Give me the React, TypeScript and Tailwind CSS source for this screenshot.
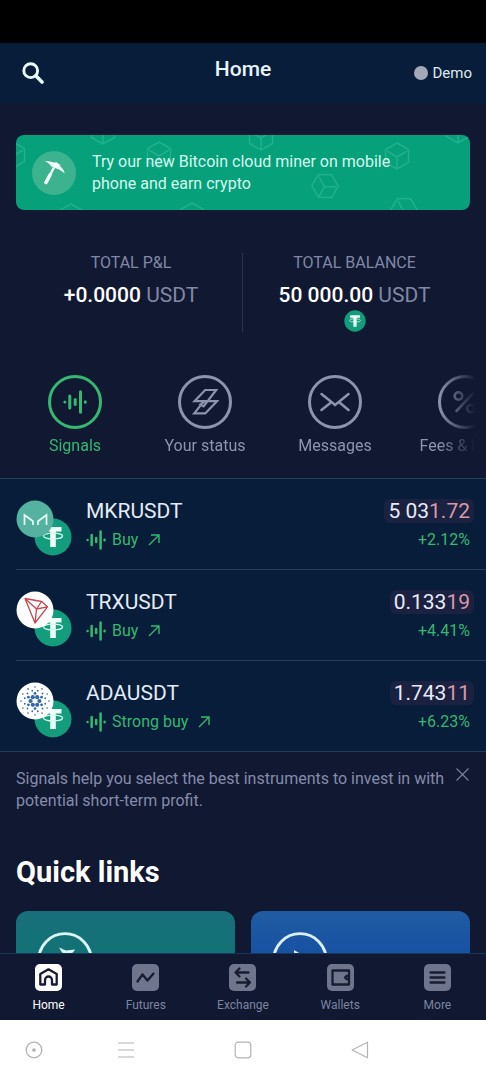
import React from "react";

type IconProps = { className?: string };

function SearchIcon({ className }: IconProps) {
  return (
    <svg viewBox="0 0 22 22" className={className} fill="none" stroke="currentColor" aria-hidden="true">
      <circle cx="8.7" cy="8.7" r="6.9" strokeWidth="2.9" />
      <path d="M13.8 13.8 20 20" strokeWidth="3.6" strokeLinecap="round" />
    </svg>
  );
}

function SignalIcon({ className }: IconProps) {
  return (
    <svg viewBox="0 0 24 24" className={className} fill="none" stroke="currentColor" strokeLinecap="round" strokeWidth="3" aria-hidden="true">
      <path d="M1.9 11.9v.2M22.3 11.7v.6" />
      <path d="M6.8 6v12M12.2 9.5v5M17.5 1.8v20.4" />
    </svg>
  );
}

function StatusIcon({ className }: IconProps) {
  return (
    <svg viewBox="0 0 28 28" className={className} fill="none" stroke="currentColor" strokeWidth="2.2" strokeLinejoin="miter" aria-hidden="true">
      <path d="M14.2 2H25.2L12.6 18.4 9.4 16.6 14 13.2H3.5Z" />
      <path d="M17.2 13.2H26L14.2 25.4H3.2L9.4 17.6" />
    </svg>
  );
}

function MessagesIcon({ className }: IconProps) {
  return (
    <svg viewBox="0 0 30 20" className={className} fill="none" stroke="currentColor" strokeWidth="2.5" strokeLinecap="round" strokeLinejoin="round" aria-hidden="true">
      <path d="M1.5 2 13 11.2 15 13.2 17.2 11.2 28.5 2M1.5 18 11 10.4M28.5 18 19.2 10.2" />
    </svg>
  );
}

function PercentIcon({ className }: IconProps) {
  return (
    <svg viewBox="0 0 24 24" className={className} fill="none" stroke="currentColor" strokeWidth="2.6" strokeLinecap="round" aria-hidden="true">
      <circle cx="5.5" cy="6" r="3.8" />
      <circle cx="18" cy="18.5" r="3.8" />
      <path d="M20 3.5 3.5 21" />
    </svg>
  );
}

function PickaxeIcon({ className }: IconProps) {
  return (
    <svg viewBox="0 0 44 44" className={className} aria-hidden="true">
      <circle cx="22" cy="22" r="22" fill="#3db28e" />
      <path d="M22 16.5 18 24" stroke="#f2fffb" strokeWidth="2.4" />
      <path d="M18 24 14 31.5" stroke="#f2fffb" strokeWidth="3.6" strokeLinecap="round" />
      <path d="M12.5 10.2C17 10 20 10.8 22.6 11.6L24.6 11.2 28.2 14 28.4 15.4C30.8 17.4 32.4 19.6 32.6 22.6 30 20.2 27.4 18.6 24.4 17.6L19 15.2C17.6 12.8 15.6 11.2 12.5 10.2Z" fill="#f2fffb" />
    </svg>
  );
}

function Cubes({ className }: IconProps) {
  const cubes = [
    [-3, 20, 0], [87, -4, 0], [143, 20, 0], [245, 2, 0], [309, 51, 30],
    [381, 21, 0], [442, -5, 0], [388, 75, 30], [55, 82, 0], [176, 81, 0],
  ];
  return (
    <svg className={className} fill="none" stroke="#53d0ad" strokeOpacity="0.35" strokeWidth="1.5" aria-hidden="true">
      {cubes.map(([x, y, r]) => (
        <g key={`${x}-${y}`} transform={`translate(${x} ${y}) rotate(${r})`}>
          <path d="M0-13 11.5-6.5V6.5L0 13-11.5 6.5V-6.5Z" />
          <path d="M0 1V12M0 1 10-5M0 1-10-5" />
        </g>
      ))}
    </svg>
  );
}

function Tether({ className }: IconProps) {
  return (
    <svg viewBox="0 0 38 38" className={className} aria-hidden="true">
      <circle cx="19" cy="19" r="18.5" fill="#139d7c" />
      <path d="M10.5 9H27.5V13.6H21.8V29H16.2V13.6H10.5Z" fill="#effff9" />
      <ellipse cx="19" cy="18" rx="9.6" ry="2.9" fill="none" stroke="#d5f7ec" strokeWidth="1.3" />
    </svg>
  );
}

function Maker({ className }: IconProps) {
  return (
    <svg viewBox="0 0 38 38" className={className} aria-hidden="true">
      <circle cx="19" cy="19" r="18.5" fill="#55b2a0" />
      <path d="M8.5 25V15L17 21.2V25M30.5 25V15L22 21.2V25" fill="none" stroke="#e9fbf6" strokeWidth="1.7" />
    </svg>
  );
}

function Tron({ className }: IconProps) {
  return (
    <svg viewBox="0 0 38 38" className={className} aria-hidden="true">
      <circle cx="19" cy="19" r="18.5" fill="#fff" />
      <path d="M9 7.5 25.5 10.5 31.5 15.8 19 32ZM9 7.5 20.5 18 31.5 15.8M25.5 10.5 20.5 18 19 32" fill="none" stroke="#c9474e" strokeWidth="1.3" strokeLinejoin="round" />
    </svg>
  );
}

function Cardano({ className }: IconProps) {
  const rings = [
    { n: 6, r: 4.4, s: 2.1, o: 0 },
    { n: 6, r: 7.6, s: 1.4, o: 30 },
    { n: 12, r: 10.6, s: 0.9, o: 15 },
    { n: 12, r: 14, s: 0.8, o: 0 },
  ];
  return (
    <svg viewBox="0 0 38 38" className={className} aria-hidden="true">
      <circle cx="19" cy="19" r="18.5" fill="#fff" />
      {rings.map(({ n, r, s, o }) =>
        Array.from({ length: n }, (_, i) => {
          const a = ((i * 360) / n + o) * (Math.PI / 180);
          return <circle key={`${r}-${i}`} cx={19 + r * Math.cos(a)} cy={19 + r * Math.sin(a)} r={s} fill="#3468a8" />;
        }),
      )}
    </svg>
  );
}

function ArrowUpRight({ className }: IconProps) {
  return (
    <svg viewBox="0 0 12 12" className={className} fill="none" stroke="currentColor" strokeWidth="1.4" aria-hidden="true">
      <path d="M1 11 11 1M3 1H11V9" />
    </svg>
  );
}

const shortcuts = [
  { label: "Signals", icon: <SignalIcon className="size-6" />, active: true },
  { label: "Your status", icon: <StatusIcon className="size-7" />, active: false },
  { label: "Messages", icon: <MessagesIcon className="h-5 w-[30px]" />, active: false },
  { label: "Fees & limits", icon: <PercentIcon className="size-6" />, active: false },
];

const signals = [
  { pair: "MKRUSDT", advice: "Buy", price: "5 03", tick: "1.72", change: "+2.12%", Coin: Maker },
  { pair: "TRXUSDT", advice: "Buy", price: "0.133", tick: "19", change: "+4.41%", Coin: Tron },
  { pair: "ADAUSDT", advice: "Strong buy", price: "1.743", tick: "11", change: "+6.23%", Coin: Cardano },
];

const tabs = [
  { label: "Home", path: <path d="M5.3 20.5V10L13.5 5.3 21.7 10V20.5H17V16A3.5 3.5 0 0 0 10 16V20.5Z" /> },
  { label: "Futures", path: <path d="M5.5 17.5 10.5 10.5 15.5 16.5 21.5 9.5" /> },
  { label: "Exchange", path: <path d="M19.5 8.5H7M10.5 4.5 6.5 8.5 10.5 12.5M8 18.5H20.5M17 14.5 21 18.5 17 22.5" /> },
  { label: "Wallets", path: <path d="M22 10V6.5H5.5V20.5H22V17M22 10V17M22 12H19.4L18 13.5 19.4 15H22" /> },
  { label: "More", path: <path d="M6.5 8.5H20.5M6.5 13.5H20.5M6.5 18.5H20.5" /> },
];

export default function App() {
  return (
    <div className="flex h-screen flex-col bg-[#111831] font-[Roboto,sans-serif] text-white">
      <div className="h-[43px] shrink-0 bg-black" />
      <header className="grid h-[60px] shrink-0 grid-cols-3 items-center bg-[#081d39] px-3.5">
        <button aria-label="Search" className="justify-self-start px-2 text-[#e9fbfb]">
          <SearchIcon className="size-[22px]" />
        </button>
        <h1 className="justify-self-center pb-2 text-[21px] leading-7 font-medium text-[#e8f4fb]">Home</h1>
        <button className="flex items-center gap-1 justify-self-end text-[15px] text-[#dfe9f2]">
          <span className="size-3.5 rounded-full bg-[#a3a9b9]" />
          Demo
        </button>
      </header>

      <main className="min-h-0 flex-1 overflow-y-auto [scrollbar-width:none]">
        <a href="#miner" className="relative mx-4 mt-8 flex h-[75px] items-center gap-4 overflow-hidden rounded-lg bg-[#06a07b] pl-4">
          <Cubes className="absolute inset-0 size-full" />
          <PickaxeIcon className="relative size-11 shrink-0" />
          <span className="relative max-w-[310px] text-base leading-[22px] text-[#d5f9ee]">
            Try our new Bitcoin cloud miner on mobile phone and earn crypto
          </span>
        </a>

        <section className="mx-5 mt-[43px] grid h-[79px] grid-cols-2 text-center">
          <div className="border-r border-[#2b3350]">
            <h2 className="text-base leading-5 text-[#8188a6]">TOTAL P&amp;L</h2>
            <p className="mt-2 text-[21px] leading-7 font-medium">
              +0.0000 <span className="font-normal text-[#8188a6]">USDT</span>
            </p>
          </div>
          <div className="flex flex-col items-center">
            <h2 className="text-base leading-5 text-[#8188a6]">TOTAL BALANCE</h2>
            <p className="mt-2 text-[21px] leading-7 font-medium">
              50 000.00 <span className="font-normal text-[#8188a6]">USDT</span>
            </p>
            <Tether className="mt-px size-[22px]" />
          </div>
        </section>

        <nav aria-label="Shortcuts" className="mx-2.5 mt-[43px] flex h-[103px] overflow-x-auto [mask-image:linear-gradient(to_right,#000_92%,transparent_100%)] [scrollbar-width:none]">
          {shortcuts.map(({ label, icon, active }) => (
            <button
              key={label}
              className={`flex w-[130px] shrink-0 flex-col items-center gap-[7px] ${active ? "text-[#35b870]" : "text-[#8e94ae]"}`}
            >
              <span className="flex size-[54px] items-center justify-center rounded-full border-[3px] border-current">{icon}</span>
              <span className="text-base leading-5 whitespace-nowrap">{label}</span>
            </button>
          ))}
        </nav>

        <ul className="border-y border-[#243c57] bg-[#081d39]">
          {signals.map(({ pair, advice, price, tick, change, Coin }) => (
            <li key={pair} className="ml-4 flex h-[91px] gap-[14px] border-b border-[#243c57] last:h-[90px] last:border-0">
              <div className="relative mt-[21px] size-14 shrink-0">
                <Tether className="absolute right-0 bottom-0 size-[38px]" />
                <Coin className="absolute top-0 left-0 size-[38px]" />
              </div>
              <div className="flex flex-1 justify-between pt-[18px] pr-4">
                <div>
                  <h3 className="text-[21px] leading-7 text-[#e3ecf6]">{pair}</h3>
                  <p className="mt-[3px] flex items-center gap-1.5 text-base leading-6 text-[#35b870]">
                    <SignalIcon className="size-5" />
                    {advice}
                    <ArrowUpRight className="ml-1 size-3" />
                  </p>
                </div>
                <div className="flex flex-col items-end">
                  <p className="my-0.5 -mr-1 rounded-md bg-[#1b2140] px-1 text-[21px] leading-6 text-[#e8ecf8]">
                    {price}
                    <span className="text-[#d69aa9]">{tick}</span>
                  </p>
                  <p className="mt-[3px] text-base leading-6 text-[#35b870]">{change}</p>
                </div>
              </div>
            </li>
          ))}
        </ul>

        <section className="flex items-start justify-between pt-4 pr-[17px] pl-4">
          <p className="max-w-[430px] text-base leading-[22px] text-[#858cab]">
            Signals help you select the best instruments to invest in with potential short-term profit.
          </p>
          <button aria-label="Dismiss" className="text-[#7b829f]">
            <svg viewBox="0 0 13 13" className="size-[13px]" fill="none" stroke="currentColor" strokeWidth="1.1">
              <path d="M.5.5 12.5 12.5M12.5.5.5 12.5" />
            </svg>
          </button>
        </section>

        <section className="mt-[42px] px-4">
          <h2 className="text-[29px] leading-9 font-bold">Quick links</h2>
          <div className="mt-[21px] grid grid-cols-2 gap-4">
            <a href="#mining" aria-label="Mining" className="h-[120px] rounded-xl bg-linear-to-b from-[#176f7b] to-[#08786b] pt-[21px] pl-[21px]">
              <svg viewBox="0 0 56 56" className="size-14" aria-hidden="true">
                <circle cx="28" cy="28" r="26.3" fill="none" stroke="#dcf8f6" strokeWidth="2.8" />
                <path d="M22 15.5 29 18.5 38 17.5 36 20.5 30 22 25 20.5Z" fill="#dcf8f6" />
                <path d="M30 20 24 38" stroke="#dcf8f6" strokeWidth="3" />
              </svg>
            </a>
            <a href="#video" aria-label="Video guides" className="h-[120px] rounded-xl bg-linear-to-b from-[#205ba2] via-[#144da3] to-[#0a43a5] pt-[21px] pl-[21px]">
              <svg viewBox="0 0 56 56" className="size-14" aria-hidden="true">
                <circle cx="28" cy="28" r="26.3" fill="none" stroke="#dcf0fb" strokeWidth="2.8" />
                <path d="M22 18 39 28 22 39Z" fill="#dcf0fb" />
              </svg>
            </a>
          </div>
        </section>
      </main>

      <nav aria-label="Main" className="grid h-[67px] shrink-0 grid-cols-5 border-t border-[#15375a] bg-[#111831]">
        {tabs.map(({ label, path }, i) => (
          <a
            key={label}
            href={`#${label.toLowerCase()}`}
            className={`flex flex-col items-center gap-1.5 pt-2.5 text-xs ${i === 0 ? "text-white" : "text-[#7d84a0]"}`}
          >
            <svg viewBox="0 0 27 27" className="size-[27px]" aria-hidden="true">
              <rect width="27" height="27" rx="5" fill={i === 0 ? "#fff" : "#70758e"} />
              <g fill="none" stroke="#171d30" strokeWidth="2.3" strokeLinecap="round" strokeLinejoin="round">{path}</g>
            </svg>
            {label}
          </a>
        ))}
      </nav>

      <nav aria-label="System" className="grid h-[60px] shrink-0 grid-cols-[14fr_24fr_24fr_24fr_14fr] place-items-center bg-white text-[#b3b3b3]">
        <button aria-label="Assist">
          <svg viewBox="0 0 18 18" className="size-[18px]" fill="none" stroke="currentColor" strokeWidth="1.3">
            <circle cx="9" cy="9" r="7.8" />
            <circle cx="9" cy="9" r="1.2" fill="currentColor" />
          </svg>
        </button>
        <button aria-label="Recent apps">
          <svg viewBox="0 0 18 18" className="size-[18px]" fill="none" stroke="currentColor" strokeWidth="1.2">
            <path d="M1 2H17M1 9H17M1 16H17" />
          </svg>
        </button>
        <button aria-label="Home screen">
          <svg viewBox="0 0 18 18" className="size-[18px]" fill="none" stroke="currentColor" strokeWidth="1.2">
            <rect x="1.2" y="1.2" width="15.6" height="15.6" rx="3" />
          </svg>
        </button>
        <button aria-label="Back">
          <svg viewBox="0 0 18 18" className="size-[18px]" fill="none" stroke="currentColor" strokeWidth="1.2" strokeLinejoin="round">
            <path d="M16.5 1.2V16.8L1.2 9Z" />
          </svg>
        </button>
      </nav>
    </div>
  );
}
